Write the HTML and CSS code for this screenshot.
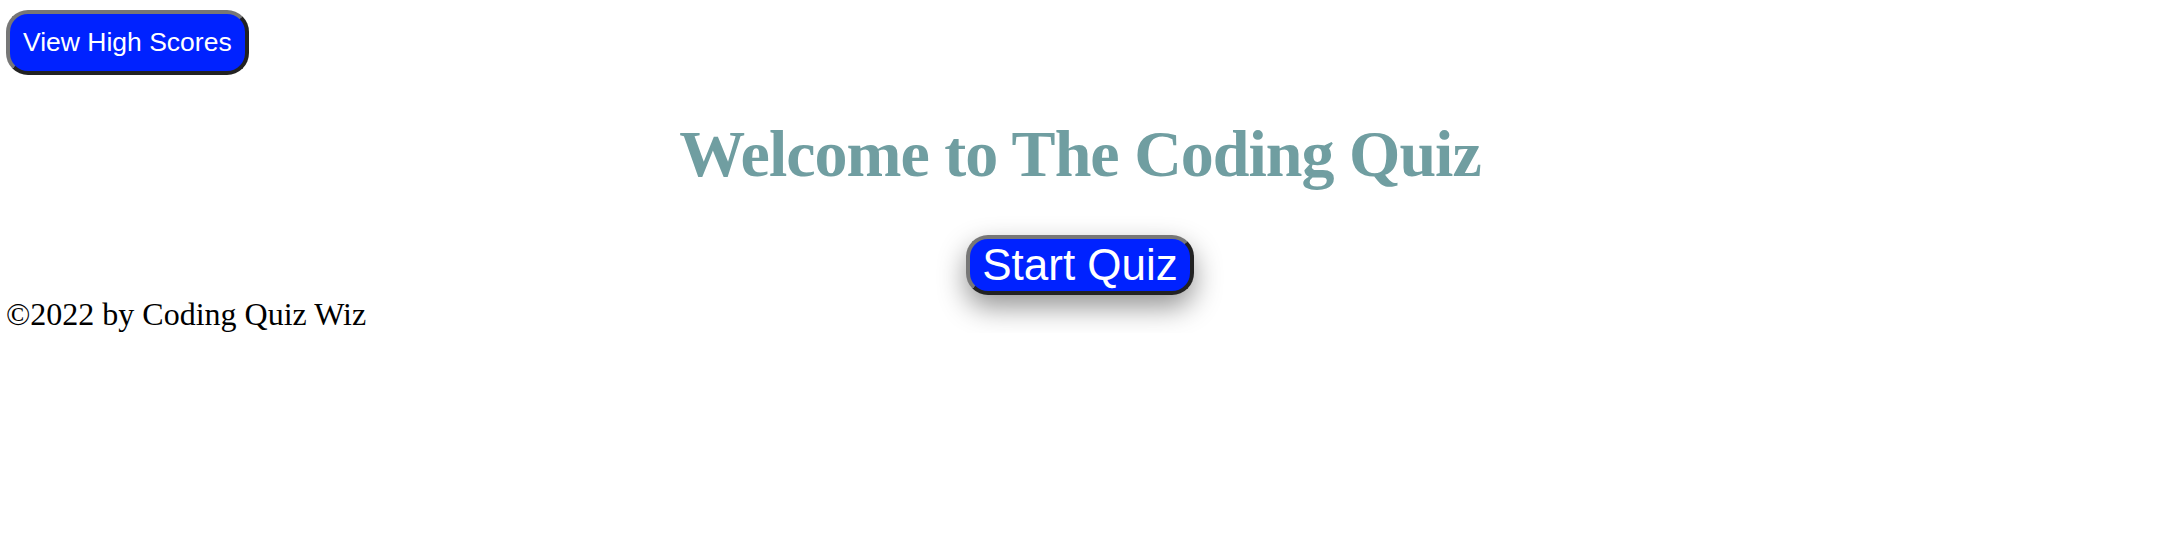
FILE: index.html
```html
<!DOCTYPE html>
<html lang="en">
<head>
<meta charset="utf-8">
<title>Coding Quiz</title>
<link rel="stylesheet" href="styles.css">
</head>
<body>
<header class="top">
  <button class="btn btn-scores">View High Scores</button>
</header>
<main class="main">
  <h1 class="title">Welcome to The Coding Quiz</h1>
  <div class="start-row">
    <button class="btn btn-start">Start Quiz</button>
  </div>
</main>
<footer class="footer">©2022 by Coding Quiz Wiz</footer>
</body>
</html>
```
FILE: styles.css
```css
html, body {
  margin: 0;
  background: #ffffff;
}
body {
  padding: 10px 16px 0 6px;
  font-family: "Liberation Serif", "Times New Roman", serif;
}
.top {
  display: flex;
}
.btn {
  font-family: "Liberation Sans", Arial, sans-serif;
  color: #ffffff;
  background: #0022ff;
  border-style: solid;
  border-width: 4px;
  border-color: #777777 #222222 #222222 #777777;
  line-height: normal;
  cursor: pointer;
}
.btn-scores {
  font-size: 26.5px;
  padding: 13px 13px;
  border-radius: 22px;
}
.main {
  display: flex;
  flex-direction: column;
  align-items: center;
}
.title {
  margin: 41px 0 43px;
  font-size: 66px;
  font-weight: bold;
  letter-spacing: -1px;
  color: #709ea1;
  line-height: normal;
}
.start-row {
  display: flex;
  justify-content: center;
}
.btn-start {
  font-size: 44px;
  padding: 1px 12px;
  border-radius: 22px;
  box-shadow: 0 12px 28px rgba(0, 0, 0, 0.42);
}
.footer {
  margin-top: 1px;
  font-size: 32px;
  color: #000000;
  line-height: normal;
}
```
